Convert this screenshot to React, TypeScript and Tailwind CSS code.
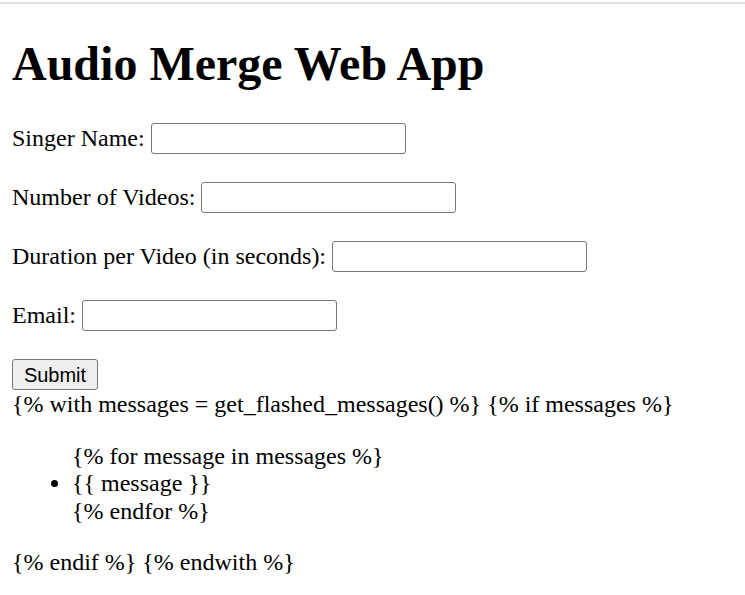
const fields = [
  "Singer Name:",
  "Number of Videos:",
  "Duration per Video (in seconds):",
  "Email:",
];

export default function App() {
  return (
    <div className="min-h-screen bg-white text-black font-['Liberation_Serif','Times_New_Roman',serif]">
      {/* browser edge */}
      <div className="h-[2px]" />
      <div className="h-[2px] bg-[#e0e0e0]" />

      <div className="px-[12px] pt-[32px]">
        <h1 className="text-[48px] font-bold leading-[55px] mb-[32px]">Audio Merge Web App</h1>

        <form className="flex flex-col gap-[28px]">
          {fields.map((label) => (
            <div key={label} className="flex items-start gap-[6px] h-[31px]">
              <label className="text-[24px] leading-[30px] whitespace-nowrap">{label}</label>
              <input
                type="text"
                className="w-[255px] h-[31px] border border-[#767676] rounded-[3px] px-[3px] bg-white text-[20px] font-['Liberation_Sans',Arial,sans-serif] outline-none"
              />
            </div>
          ))}
          <div className="h-[32px] flex items-start">
            <button
              type="button"
              className="w-[86px] h-[31px] border border-[#767676] rounded-[3px] bg-[#efefef] text-[20px] leading-none text-black font-['Liberation_Sans',Arial,sans-serif]"
            >
              Submit
            </button>
          </div>
        </form>

        <div className="text-[24px] leading-[27.5px]">
          <div>{"{% with messages = get_flashed_messages() %} {% if messages %}"}</div>
          <ul className="list-disc pl-[60px] my-[24px]">
            <div>{"{% for message in messages %}"}</div>
            <li>{"{{ message }}"}</li>
            <div>{"{% endfor %}"}</div>
          </ul>
          <div>{"{% endif %} {% endwith %}"}</div>
        </div>
      </div>
    </div>
  );
}
